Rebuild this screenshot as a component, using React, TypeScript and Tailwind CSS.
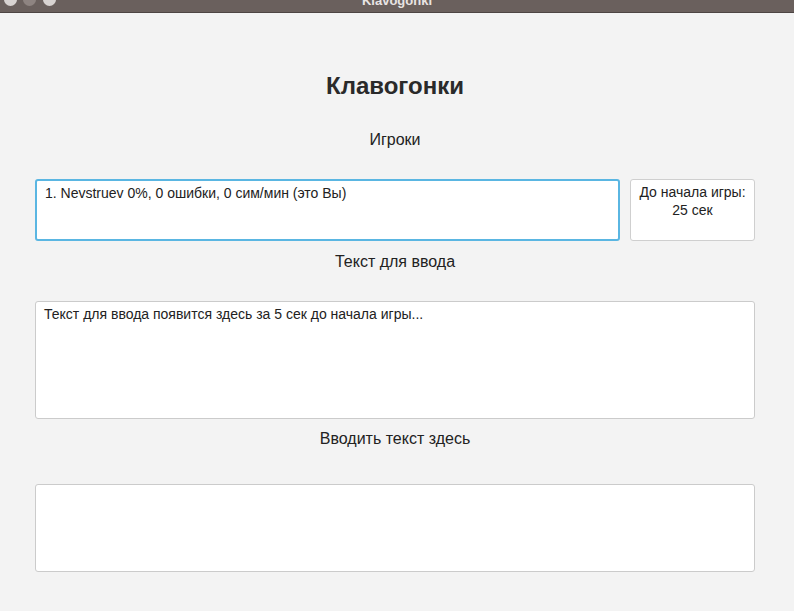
import React from "react";

export default function App() {
  return (
    <div
      className="w-[794px] h-[611px] bg-[#f3f3f3] flex flex-col overflow-hidden"
      style={{ fontFamily: '"Liberation Sans", Arial, sans-serif' }}
    >
      <div className="relative h-[13px] bg-[#6a605d] border-b border-[#4d4543] shrink-0 overflow-hidden">
        <div className="absolute left-[4px] top-[-7px] w-[13px] h-[13px] rounded-full bg-[#d8d3d1]" />
        <div className="absolute left-[23px] top-[-7px] w-[13px] h-[13px] rounded-full bg-[#8e8481]" />
        <div className="absolute left-[43px] top-[-7px] w-[13px] h-[13px] rounded-full bg-[#d8d3d1]" />
        <div className="absolute left-0 right-0 top-[-9px] text-center text-[13px] font-bold text-[#e8e4e3]">
          Klavogonki
        </div>
      </div>
      <div className="flex flex-col pl-[35px] pr-[39px] text-[#222]">
        <div className="mt-[59px] h-[28px] flex items-center justify-center text-[24px] font-bold text-[#2a2a2a]">
          Клавогонки
        </div>
        <div className="mt-[30px] h-[20px] flex items-center justify-center text-[16px]">
          Игроки
        </div>
        <div className="mt-[29px] flex gap-[10px] h-[62px]">
          <div className="flex-1 bg-white border-2 border-[#5ab6e2] rounded-[3px] px-[8px] pt-[3px] text-[14px] leading-[18px]">
            1. Nevstruev 0%, 0 ошибки, 0 сим/мин (это Вы)
          </div>
          <div className="w-[125px] bg-white border border-[#cfcfcf] rounded-[3px] pt-[3px] text-center text-[14px] leading-[18px]">
            До начала игры:
            <br />
            25 сек
          </div>
        </div>
        <div className="mt-[11px] h-[20px] flex items-center justify-center text-[16px]">
          Текст для ввода
        </div>
        <div className="mt-[29px] h-[118px] bg-white border border-[#cbcbcb] rounded-[3px] px-[8px] pt-[3px] text-[14px] leading-[18px]">
          Текст для ввода появится здесь за 5 сек до начала игры...
        </div>
        <div className="mt-[9px] h-[22px] flex items-center justify-center text-[16px]">
          Вводить текст здесь
        </div>
        <div className="mt-[34px] h-[88px] bg-white border border-[#cbcbcb] rounded-[3px]" />
      </div>
    </div>
  );
}
